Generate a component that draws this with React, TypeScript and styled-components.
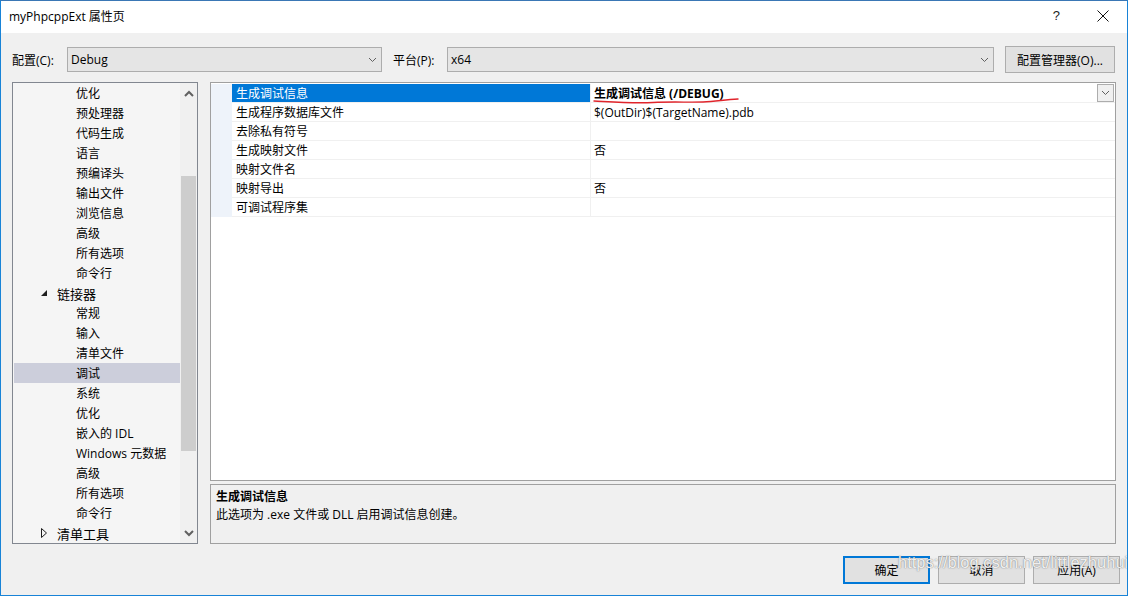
import styled, { createGlobalStyle } from 'styled-components';

const GlobalStyle = createGlobalStyle`
  html, body {
    margin: 0;
    padding: 0;
    background: #ffffff;
  }
  body {
    font-family: "Open Sans", "Noto Sans CJK SC", sans-serif;
    font-size: 12px;
    color: #000000;
  }
  * {
    box-sizing: border-box;
  }
`;

type TreeItem = { label: string; level: 1 | 2; arrow?: 'open' | 'closed'; selected?: boolean };

const treeItems: TreeItem[] = [
  { label: '优化', level: 2 },
  { label: '预处理器', level: 2 },
  { label: '代码生成', level: 2 },
  { label: '语言', level: 2 },
  { label: '预编译头', level: 2 },
  { label: '输出文件', level: 2 },
  { label: '浏览信息', level: 2 },
  { label: '高级', level: 2 },
  { label: '所有选项', level: 2 },
  { label: '命令行', level: 2 },
  { label: '链接器', level: 1, arrow: 'open' },
  { label: '常规', level: 2 },
  { label: '输入', level: 2 },
  { label: '清单文件', level: 2 },
  { label: '调试', level: 2, selected: true },
  { label: '系统', level: 2 },
  { label: '优化', level: 2 },
  { label: '嵌入的 IDL', level: 2 },
  { label: 'Windows 元数据', level: 2 },
  { label: '高级', level: 2 },
  { label: '所有选项', level: 2 },
  { label: '命令行', level: 2 },
  { label: '清单工具', level: 1, arrow: 'closed' },
];

const properties = [
  { name: '生成调试信息', value: '生成调试信息 (/DEBUG)', selected: true },
  { name: '生成程序数据库文件', value: '$(OutDir)$(TargetName).pdb' },
  { name: '去除私有符号', value: '' },
  { name: '生成映射文件', value: '否' },
  { name: '映射文件名', value: '' },
  { name: '映射导出', value: '否' },
  { name: '可调试程序集', value: '' },
];

const Chevron = ({ up = false }: { up?: boolean }) => (
  <svg width="9" height="6" viewBox="0 0 9 6">
    <path
      d={up ? 'M1 5 L4.5 1.5 L8 5' : 'M1 1 L4.5 4.5 L8 1'}
      fill="none"
      stroke="#606060"
      strokeWidth="1"
    />
  </svg>
);

const ScrollArrow = ({ up = false }: { up?: boolean }) => (
  <svg width="10" height="7" viewBox="0 0 10 7">
    <path
      d={up ? 'M1 6 L5 2 L9 6' : 'M1 1 L5 5 L9 1'}
      fill="none"
      stroke="#606060"
      strokeWidth="2"
    />
  </svg>
);

const App = () => {
  return (
    <>
      <GlobalStyle />
      <Window>
        <TitleBar>
          <TitleText>myPhpcppExt 属性页</TitleText>
          <TitleButtons>
            <HelpGlyph>?</HelpGlyph>
            <svg width="12" height="12" viewBox="0 0 12 12">
              <path d="M0.5 0.5 L11.5 11.5 M11.5 0.5 L0.5 11.5" stroke="#111" strokeWidth="1" />
            </svg>
          </TitleButtons>
        </TitleBar>

        <Body>
          <Toolbar>
            <FieldLabel $width={55}>配置(C):</FieldLabel>
            <Combo $width={315}>
              <span>Debug</span>
              <Chevron />
            </Combo>
            <FieldLabel $width={54} $offset={11}>
              平台(P):
            </FieldLabel>
            <Combo $width={547}>
              <span>x64</span>
              <Chevron />
            </Combo>
            <ManagerButton>配置管理器(O)...</ManagerButton>
          </Toolbar>

          <Main>
            <TreePanel>
              <TreeList>
                {treeItems.map((item, index) => (
                  <TreeRow key={`tree-${index}`} $selected={!!item.selected}>
                    <TreeArrow>
                      {item.arrow === 'open' && (
                        <svg width="6" height="6" viewBox="0 0 6 6">
                          <path d="M6 0 L6 6 L0 6 Z" fill="#1e1e1e" />
                        </svg>
                      )}
                      {item.arrow === 'closed' && (
                        <svg width="6" height="10" viewBox="0 0 6 10">
                          <path d="M0.5 0.5 L5.5 5 L0.5 9.5 Z" fill="none" stroke="#1e1e1e" />
                        </svg>
                      )}
                    </TreeArrow>
                    <TreeLabel $level={item.level}>{item.label}</TreeLabel>
                  </TreeRow>
                ))}
              </TreeList>
              <ScrollBar>
                <ScrollButton>
                  <ScrollArrow up />
                </ScrollButton>
                <ScrollTrack>
                  <ScrollThumb />
                </ScrollTrack>
                <ScrollButton>
                  <ScrollArrow />
                </ScrollButton>
              </ScrollBar>
            </TreePanel>

            <RightColumn>
              <PropertyGrid>
                <GridRows>
                  {properties.map((prop, index) => (
                    <GridRow key={`prop-${index}`}>
                      <Margin />
                      <NameCell $selected={!!prop.selected}>{prop.name}</NameCell>
                      <ValueCell $bold={!!prop.selected}>
                        {prop.value}
                        {prop.selected && (
                          <>
                            <RedMark width="146" height="8" viewBox="0 0 146 8">
                              <path
                                d="M1 4 C 20 5, 40 6.5, 60 5.5 C 80 4.5, 95 5.5, 110 5 C 122 4.6, 130 3, 145 2"
                                fill="none"
                                stroke="#e0242b"
                                strokeWidth="1.4"
                                strokeLinecap="round"
                              />
                            </RedMark>
                            <DropButton>
                              <Chevron />
                            </DropButton>
                          </>
                        )}
                      </ValueCell>
                    </GridRow>
                  ))}
                </GridRows>
              </PropertyGrid>
              <Description>
                <DescTitle>生成调试信息</DescTitle>
                <DescText>此选项为 .exe 文件或 DLL 启用调试信息创建。</DescText>
              </Description>
            </RightColumn>
          </Main>

          <Footer>
            <DialogButton $primary>确定</DialogButton>
            <DialogButton>取消</DialogButton>
            <DialogButton>应用(A)</DialogButton>
          </Footer>
          <Watermark>https://blog.csdn.net/littlezhuhui</Watermark>
        </Body>
      </Window>
    </>
  );
};

const Window = styled.div`
  position: relative;
  width: 1128px;
  height: 596px;
  border: 1px solid #1883d7;
  border-top-color: #3a77b5;
  background: #f0f0f0;
  display: flex;
  flex-direction: column;
  overflow: hidden;
`;

const TitleBar = styled.div`
  height: 32px;
  background: #ffffff;
  display: flex;
  align-items: center;
  justify-content: space-between;
  padding: 0 18px 0 8px;
`;

const TitleText = styled.div`
  font-size: 12px;
  margin-top: -2px;
`;

const TitleButtons = styled.div`
  display: flex;
  align-items: center;
  gap: 37px;
  margin-top: -3px;
`;

const HelpGlyph = styled.span`
  font-family: "Liberation Sans", sans-serif;
  font-size: 13px;
  color: #222;
`;

const Body = styled.div`
  position: relative;
  flex: 1;
  display: flex;
  flex-direction: column;
  padding: 13px 7px 0 11px;
`;

const Toolbar = styled.div`
  display: flex;
  align-items: center;
  height: 27px;
`;

const FieldLabel = styled.div<{ $width: number; $offset?: number }>`
  width: ${({ $width }) => $width}px;
  margin-left: ${({ $offset }) => $offset || 0}px;
  white-space: nowrap;
`;

const Combo = styled.div<{ $width: number }>`
  width: ${({ $width }) => $width}px;
  height: 25px;
  background: #e5e5e5;
  border: 1px solid #adadad;
  display: flex;
  align-items: center;
  justify-content: space-between;
  padding: 0 4px 0 3px;
`;

const ManagerButton = styled.div`
  margin-left: 11px;
  width: 110px;
  height: 27px;
  background: #e1e1e1;
  border: 1px solid #adadad;
  display: flex;
  align-items: center;
  justify-content: center;
  white-space: nowrap;
`;

const Main = styled.div`
  margin-top: 9px;
  height: 462px;
  display: flex;
  gap: 12px;
`;

const TreePanel = styled.div`
  width: 186px;
  border: 1px solid #828790;
  background: #f5f5f5;
  display: flex;
  overflow: hidden;
`;

const TreeList = styled.div`
  flex: 1;
  padding: 0 0 0 1px;
  overflow: hidden;
`;

const TreeRow = styled.div<{ $selected: boolean }>`
  height: 20px;
  display: flex;
  align-items: center;
  background: ${({ $selected }) => ($selected ? '#cccedb' : 'transparent')};
`;

const TreeArrow = styled.div`
  width: 43px;
  display: flex;
  justify-content: flex-end;
  padding-right: 10px;
  align-items: center;
`;

const TreeLabel = styled.span<{ $level: 1 | 2 }>`
  margin-left: ${({ $level }) => ($level === 2 ? 19 : 0)}px;
  white-space: nowrap;
  font-size: ${({ $level }) => ($level === 1 ? 13 : 12)}px;
`;

const ScrollBar = styled.div`
  width: 17px;
  background: #f0f0f0;
  display: flex;
  flex-direction: column;
`;

const ScrollButton = styled.div`
  height: 20px;
  display: flex;
  align-items: center;
  justify-content: center;
`;

const ScrollTrack = styled.div`
  flex: 1;
  padding: 73px 1px 0 1px;
`;

const ScrollThumb = styled.div`
  height: 275px;
  background: #cdcdcd;
`;

const RightColumn = styled.div`
  width: 906px;
  display: flex;
  flex-direction: column;
  gap: 3px;
`;

const PropertyGrid = styled.div`
  height: 399px;
  border: 1px solid #a0a0a0;
  background: #ffffff;
  padding-top: 1px;
`;

const GridRows = styled.div`
  display: flex;
  flex-direction: column;
`;

const GridRow = styled.div`
  height: 19px;
  display: flex;
  border-bottom: 1px solid #f0f0f0;
`;

const Margin = styled.div`
  width: 21px;
  background: #eef3fa;
  margin-bottom: -1px;
`;

const NameCell = styled.div<{ $selected: boolean }>`
  width: 359px;
  padding-left: 4px;
  display: flex;
  align-items: center;
  white-space: nowrap;
  background: ${({ $selected }) => ($selected ? '#0078d7' : 'transparent')};
  color: ${({ $selected }) => ($selected ? '#ffffff' : '#000000')};
  border-right: 1px solid #f0f0f0;
`;

const ValueCell = styled.div<{ $bold: boolean }>`
  position: relative;
  flex: 1;
  padding-left: 3px;
  display: flex;
  align-items: center;
  white-space: nowrap;
  font-weight: ${({ $bold }) => ($bold ? 700 : 400)};
`;

const RedMark = styled.svg`
  position: absolute;
  left: 2px;
  top: 13px;
`;

const DropButton = styled.div`
  position: absolute;
  right: 1px;
  top: 0;
  width: 17px;
  height: 18px;
  background: #f0f0f0;
  border: 1px solid #adadad;
  display: flex;
  align-items: center;
  justify-content: center;
`;

const Description = styled.div`
  height: 60px;
  border: 1px solid #a0a0a0;
  background: #f0f0f0;
  padding: 3px 5px;
  display: flex;
  flex-direction: column;
`;

const DescTitle = styled.div`
  font-weight: 700;
  line-height: 17px;
`;

const DescText = styled.div`
  line-height: 19px;
`;

const Footer = styled.div`
  margin-top: 12px;
  display: flex;
  justify-content: flex-end;
  gap: 8px;
`;

const DialogButton = styled.div<{ $primary?: boolean }>`
  width: 87px;
  height: 28px;
  background: #e1e1e1;
  border: ${({ $primary }) => ($primary ? '2px solid #0078d7' : '1px solid #adadad')};
  display: flex;
  align-items: center;
  justify-content: center;
`;

const Watermark = styled.div`
  position: absolute;
  left: 897px;
  top: 520px;
  font-family: "Liberation Sans", sans-serif;
  font-size: 16.5px;
  color: rgba(255, 255, 255, 0.9);
  text-shadow: 0 0 1px rgba(90, 90, 90, 0.8), 0 0 2px rgba(140, 140, 140, 0.5);
  white-space: nowrap;
  pointer-events: none;
`;

export default App;
